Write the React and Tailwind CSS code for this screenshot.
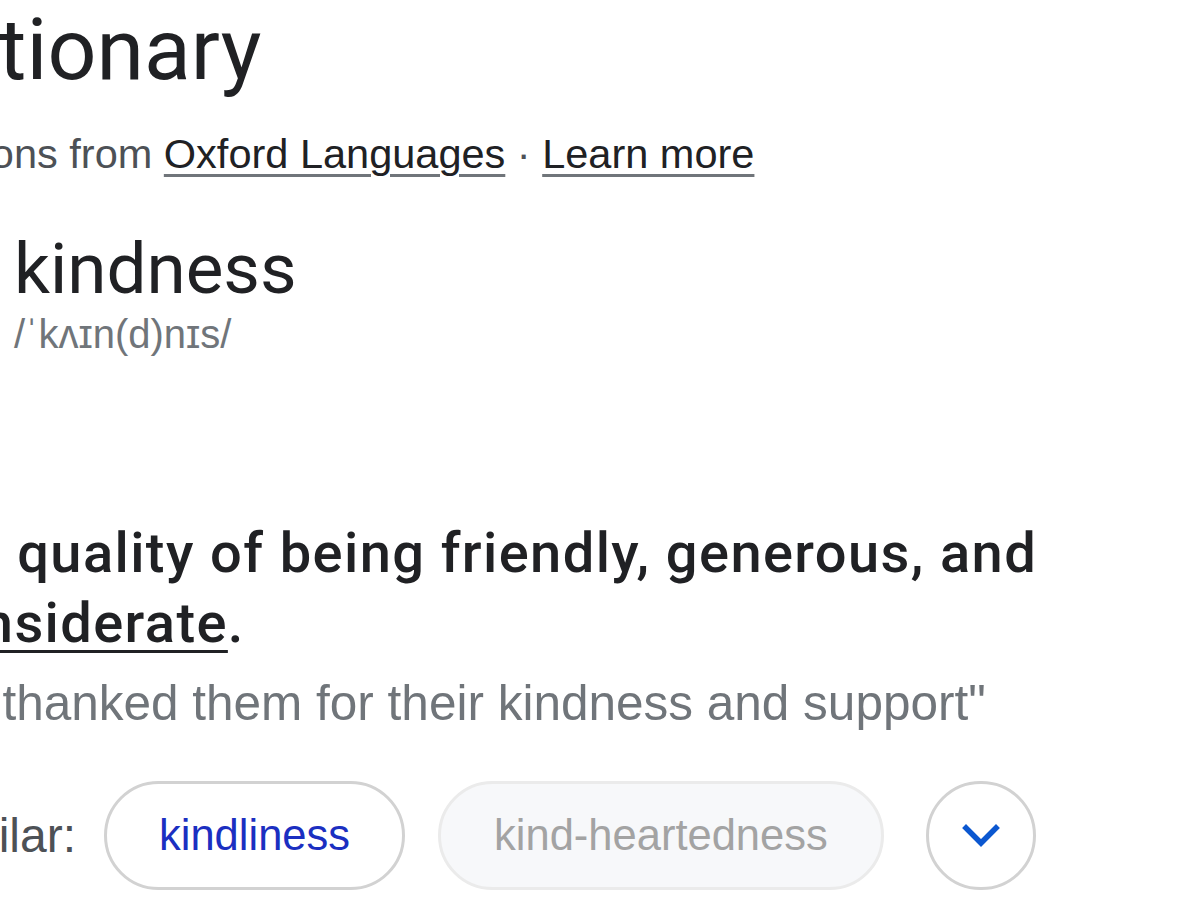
import React from "react";

const heading = { fontFamily: "Roboto, 'Noto Sans', sans-serif" };
const body = { fontFamily: "'Liberation Sans', Arial, sans-serif" };

function ChevronDown() {
  return (
    <svg width="40" height="24" viewBox="0 0 40 24" fill="none">
      <path d="M5 4 L20 19 L35 4" stroke="#0b57d0" strokeWidth="5.5" strokeLinecap="square" />
    </svg>
  );
}

export default function App() {
  return (
    <div className="w-[1200px] h-[900px] overflow-hidden bg-white">
      <div className="ml-[-122px] w-[1400px]">
        {/* title */}
        <div style={heading} className="ml-[-2px] text-[86px] leading-[100px] text-[#202124]">
          Dictionary
        </div>

        {/* source */}
        <div style={body} className="ml-[-14px] mt-[29px] text-[41.5px] leading-[50px] text-[#4d5156] whitespace-nowrap">
          Definitions from{" "}
          <span className="text-[#202124] underline decoration-[#70757a] decoration-[3px] underline-offset-[6px]">
            Oxford Languages
          </span>{" "}
          ·{" "}
          <span className="text-[#202124] underline decoration-[#70757a] decoration-[3px] underline-offset-[6px]">
            Learn more
          </span>
        </div>

        {/* headword */}
        <div className="pl-[136px]">
          <div style={heading} className="mt-[50px] text-[71px] leading-[80px] text-[#202124]">
            kindness
          </div>
          <div style={body} className="text-[40px] leading-[50px] text-[#70757a]">
            /ˈkʌɪn(d)nɪs/
          </div>
        </div>

        {/* definition */}
        <div className="pl-[38px] mt-[159px]">
          <div style={heading} className="ml-[2px] w-[1180px] text-[56px] leading-[70px] font-medium tracking-[1.4px] text-[#202124]">
            the quality of being friendly, generous, and{" "}
            <span className="underline decoration-[3px] underline-offset-[8px]">considerate</span>.
          </div>
          <div style={body} className="mt-[20px] text-[49.5px] leading-[50px] text-[#70757a] whitespace-nowrap">
            "he thanked them for their kindness and support"
          </div>

          {/* similar */}
          <div className="mt-[53px] flex items-center whitespace-nowrap" style={body}>
            <span className="text-[48px] leading-[50px] text-[#4d5156]">Similar:</span>
            <div className="ml-[28px] h-[109px] px-[52px] flex items-center rounded-full border-[3px] border-[#d2d2d2] bg-white text-[43.5px] text-[#1b2fc1]">
              kindliness
            </div>
            <div className="ml-[33px] h-[109px] px-[53px] flex items-center rounded-full border-[3px] border-[#ebebeb] bg-[#f7f8fa] text-[43.5px] text-[#a3a3a3]">
              kind-heartedness
            </div>
            <div className="ml-[42px] w-[110px] h-[109px] flex items-center justify-center rounded-full border-[3px] border-[#d2d2d2] bg-white">
              <ChevronDown />
            </div>
          </div>
        </div>
      </div>
    </div>
  );
}
